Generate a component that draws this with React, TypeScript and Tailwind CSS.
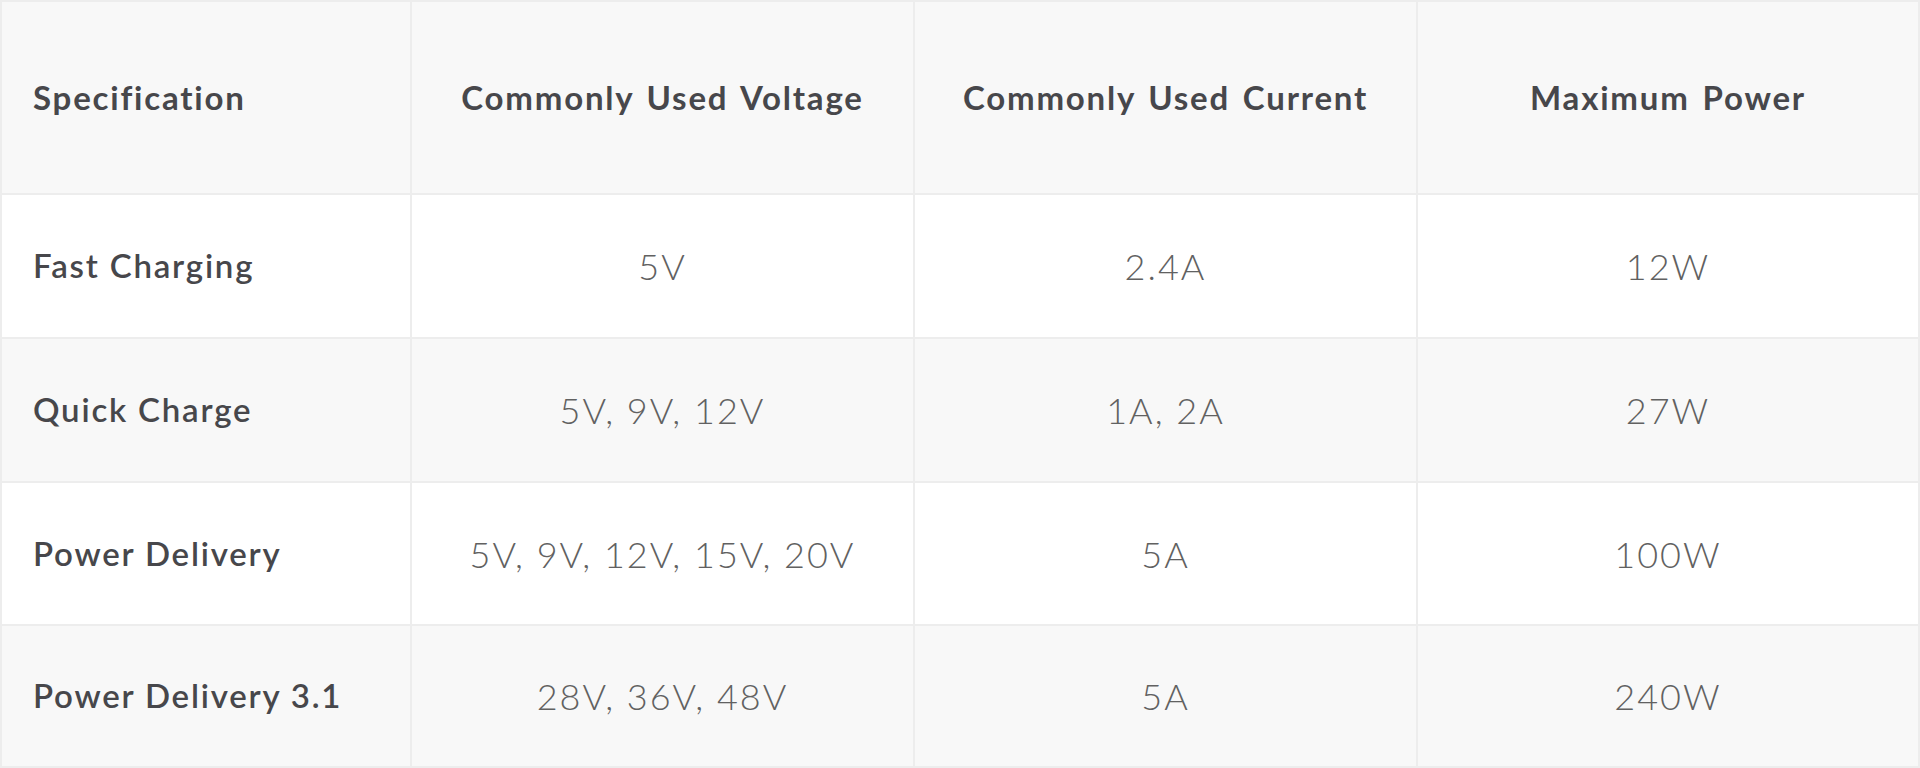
import React from "react";

const rows = [
  { spec: "Fast Charging", v: "5V", a: "2.4A", p: "12W", bg: "bg-white", h: "h-[142px]" },
  { spec: "Quick Charge", v: "5V, 9V, 12V", a: "1A, 2A", p: "27W", bg: "bg-[#f8f8f8]", h: "h-[142px]" },
  { spec: "Power Delivery", v: "5V, 9V, 12V, 15V, 20V", a: "5A", p: "100W", bg: "bg-white", h: "h-[141px]" },
  { spec: "Power Delivery 3.1", v: "28V, 36V, 48V", a: "5A", p: "240W", bg: "bg-[#f8f8f8]", h: "h-[140px]" },
];

const head = "h-[191px] bg-[#f8f8f8] flex items-center text-[33px] font-bold tracking-[1.8px] [word-spacing:3px] text-[#47474b]";
const val = "flex items-center justify-center text-[36px] font-light tracking-[2px] text-[#616161]";

export default function App() {
  return (
    <div className="w-[1920px] h-[768px] bg-white font-['Lato',sans-serif]">
      <div className="grid grid-cols-[408px_501px_501px_500px] gap-[2px] p-[2px] bg-[#ededed]">
        <div className={`${head} pl-[31px]`}>Specification</div>
        <div className={`${head} justify-center`}>Commonly Used Voltage</div>
        <div className={`${head} justify-center`}>Commonly Used Current</div>
        <div className={`${head} justify-center`}>Maximum Power</div>
        {rows.map((r) => (
          <React.Fragment key={r.spec}>
            <div
              className={`${r.h} ${r.bg} flex items-center pl-[31px] text-[33px] font-semibold tracking-[1.8px] text-[#47474b]`}
            >
              {r.spec}
            </div>
            <div className={`${r.h} ${r.bg} ${val}`}>{r.v}</div>
            <div className={`${r.h} ${r.bg} ${val}`}>{r.a}</div>
            <div className={`${r.h} ${r.bg} ${val}`}>{r.p}</div>
          </React.Fragment>
        ))}
      </div>
    </div>
  );
}
